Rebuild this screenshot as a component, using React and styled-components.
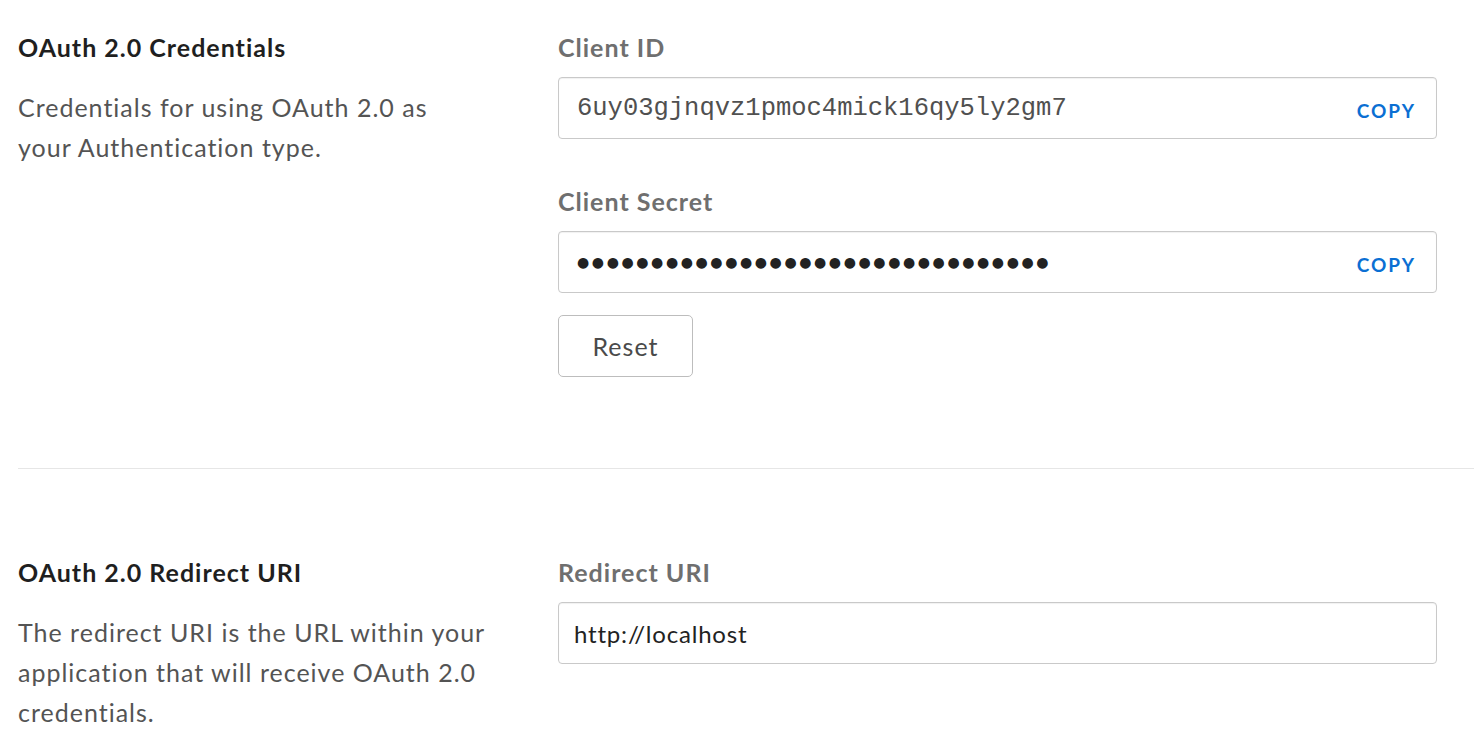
import styled, { createGlobalStyle } from 'styled-components';

const GlobalStyle = createGlobalStyle`
  body {
    margin: 0;
    background: #fff;
    font-family: Lato, "Open Sans", sans-serif;
  }
`;

const Page = styled.div`
  padding: 34px 0 0 18px;
`;

const Section = styled.section`
  display: grid;
  grid-template-columns: 540px 879px;
  padding-bottom: ${(p) => p.$bottom || 0}px;
`;

const Divider = styled.hr`
  border: none;
  border-top: 1.5px solid #e6e6e6;
  margin: 0 0 90px 0;
`;

const Intro = styled.div`
  display: flex;
  flex-direction: column;
`;

const Heading = styled.h2`
  margin: 0;
  font-size: 25px;
  line-height: 26px;
  letter-spacing: 1px;
  font-weight: 700;
  color: #1f1f1f;
`;

const Desc = styled.p`
  margin: 27px 0 0;
  font-size: 25px;
  line-height: 40px;
  letter-spacing: ${(p) => p.$spacing || 1}px;
  color: #545454;
  max-width: ${(p) => p.$width || 490}px;
`;

const Fields = styled.div`
  display: flex;
  flex-direction: column;
`;

const Field = styled.div`
  display: flex;
  flex-direction: column;
  margin-bottom: ${(p) => p.$gap || 0}px;
`;

const Label = styled.label`
  font-size: 25px;
  line-height: 26px;
  letter-spacing: 1px;
  font-weight: 700;
  color: #6f6f6f;
  margin-bottom: 17px;
`;

const Box = styled.div`
  display: flex;
  align-items: center;
  height: 62px;
  box-sizing: border-box;
  border: 1.5px solid #c9c9c9;
  border-radius: 4px;
  box-shadow: inset 0 1px 1px rgba(0, 0, 0, 0.06);
  padding: 0 20px 0 ${(p) => p.$pad || 18}px;
`;

const Value = styled.span`
  flex: 1;
  font-family: "Liberation Mono", "Courier New", monospace;
  font-size: 25.5px;
  color: #505050;
`;

const Dots = styled.span`
  flex: 1;
  font-family: "DejaVu Sans", sans-serif;
  font-size: 14px;
  letter-spacing: 2.6px;
  color: #222;
`;

const PlainValue = styled.span`
  flex: 1;
  font-size: 24px;
  letter-spacing: 0.8px;
  color: #222;
`;

const CopyButton = styled.button`
  border: none;
  background: none;
  padding: 4px 0 0;
  font-family: Lato, sans-serif;
  font-weight: 700;
  font-size: 19px;
  letter-spacing: 2px;
  color: #0b6fd3;
  cursor: pointer;
`;

const ResetButton = styled.button`
  align-self: flex-start;
  margin-top: 22px;
  width: 135px;
  height: 62px;
  background: #fff;
  border: 1.5px solid #bdbdbd;
  border-radius: 5px;
  font-family: Lato, sans-serif;
  font-size: 25px;
  letter-spacing: 1px;
  color: #4a4a4a;
  cursor: pointer;
`;

export default function App() {
  return (
    <Page>
      <GlobalStyle />
      <Section $bottom={91}>
        <Intro>
          <Heading>OAuth 2.0 Credentials</Heading>
          <Desc $width={450}>
            Credentials for using OAuth 2.0 as your Authentication type.
          </Desc>
        </Intro>
        <Fields>
          <Field $gap={49}>
            <Label>Client ID</Label>
            <Box>
              <Value>6uy03gjnqvz1pmoc4mick16qy5ly2gm7</Value>
              <CopyButton>COPY</CopyButton>
            </Box>
          </Field>
          <Field>
            <Label>Client Secret</Label>
            <Box>
              <Dots>{'●'.repeat(32)}</Dots>
              <CopyButton>COPY</CopyButton>
            </Box>
          </Field>
          <ResetButton>Reset</ResetButton>
        </Fields>
      </Section>
      <Divider />
      <Section>
        <Intro>
          <Heading>OAuth 2.0 Redirect URI</Heading>
          <Desc>
            The redirect URI is the URL within your application that will receive OAuth 2.0 credentials.
          </Desc>
        </Intro>
        <Fields>
          <Field>
            <Label>Redirect URI</Label>
            <Box $pad={15}>
              <PlainValue>http://localhost</PlainValue>
            </Box>
          </Field>
        </Fields>
      </Section>
    </Page>
  );
}
